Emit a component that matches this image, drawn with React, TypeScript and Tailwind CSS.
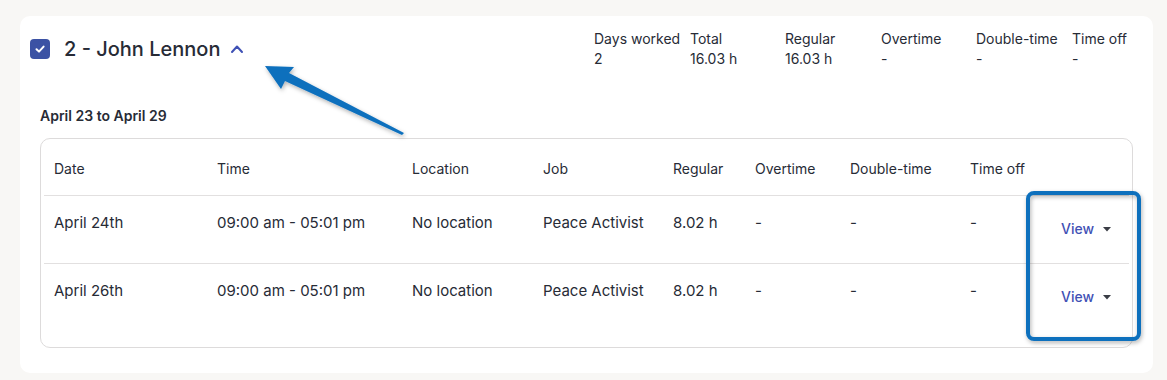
import type { ReactElement } from "react";

interface Shift {
	date: string;
	time: string;
	location: string;
	job: string;
	regular: string;
	overtime: string;
	doubleTime: string;
	timeOff: string;
}

const shifts: Shift[] = [
	{
		date: "April 24th",
		time: "09:00 am - 05:01 pm",
		location: "No location",
		job: "Peace Activist",
		regular: "8.02 h",
		overtime: "-",
		doubleTime: "-",
		timeOff: "-",
	},
	{
		date: "April 26th",
		time: "09:00 am - 05:01 pm",
		location: "No location",
		job: "Peace Activist",
		regular: "8.02 h",
		overtime: "-",
		doubleTime: "-",
		timeOff: "-",
	},
];

const stats = [
	{ label: "Days worked", value: "2" },
	{ label: "Total", value: "16.03 h" },
	{ label: "Regular", value: "16.03 h" },
	{ label: "Overtime", value: "-" },
	{ label: "Double-time", value: "-" },
	{ label: "Time off", value: "-" },
];

const cols =
	"grid grid-cols-[163px_195px_131px_130px_82px_95px_120px_90px_80px]";

const Annotations = (): ReactElement => (
	<svg
		className="pointer-events-none absolute inset-0"
		width="1167"
		height="380"
		viewBox="0 0 1167 380"
	>
		<defs>
			<filter id="shadow" x="-20%" y="-20%" width="140%" height="140%">
				<feDropShadow dx="1" dy="2" stdDeviation="2" floodColor="#000" floodOpacity="0.3" />
			</filter>
		</defs>
		<path
			d="M265 66 L294 67 L289 73 L404 133 L402 135 L285 81 L281 89 Z"
			fill="#0b6fbd"
			filter="url(#shadow)"
		/>
		<rect
			x="1028"
			y="193"
			width="111"
			height="146"
			rx="6"
			fill="none"
			stroke="#0b6fbd"
			strokeWidth="4"
			filter="url(#shadow)"
		/>
	</svg>
);

export default function App(): ReactElement {
	return (
		<div className="relative h-[380px] w-[1167px] overflow-hidden bg-[#f8f7f5] pt-4 pl-5 font-['Inter',sans-serif] text-[#272b36]">
			<section className="h-[357px] w-[1133px] rounded-[10px] bg-white px-5 pt-[13px]">
				<header className="-ml-2.5 flex items-center justify-between">
					<div className="flex items-center">
						<span className="flex h-5 w-5 items-center justify-center rounded-[4px] bg-[#3b52a4]">
							<svg width="12" height="12" viewBox="0 0 12 12">
								<path
									d="M2.5 6.2 L5 8.6 L9.6 3.6"
									fill="none"
									stroke="#fff"
									strokeWidth="2"
									strokeLinecap="round"
									strokeLinejoin="round"
								/>
							</svg>
						</span>
						<h2 className="ml-3.5 text-[20px] leading-7 font-medium">
							2 - John Lennon
						</h2>
						<svg className="ml-[10px]" width="14" height="14" viewBox="0 0 14 14">
							<path
								d="M2 10 L7 4.5 L12 10"
								fill="none"
								stroke="#3f51b5"
								strokeWidth="2"
								strokeLinecap="round"
								strokeLinejoin="round"
							/>
						</svg>
					</div>
					<dl className="grid grid-cols-[96px_95px_96px_95px_96px_61px] text-[14px] leading-5">
						{stats.map((s) => (
							<div key={s.label}>
								<dt className="whitespace-nowrap">{s.label}</dt>
								<dd>{s.value}</dd>
							</div>
						))}
					</dl>
				</header>

				<p className="mt-[37px] text-[14px] leading-5 font-semibold">
					April 23 to April 29
				</p>

				<div className="mt-[12px] rounded-[10px] border border-[#dddbdb] px-[3px] pb-[15px] leading-5">
					<div className={`${cols} h-[57px] border-b border-[#e2e0e0] pt-[20px] text-[14px]`}>
						{[
							"Date",
							"Time",
							"Location",
							"Job",
							"Regular",
							"Overtime",
							"Double-time",
							"Time off",
							"",
						].map((h, i) => (
							<div key={i} className="pl-2.5">
								{h}
							</div>
						))}
					</div>
					{shifts.map((s, idx) => (
						<div
							key={s.date}
							className={`${cols} h-[68px] text-[15px] ${idx === 0 ? "border-b border-[#e2e0e0]" : ""}`}
						>
							<div className="pt-[17px] pl-2.5">{s.date}</div>
							<div className="pt-[17px] pl-2.5">{s.time}</div>
							<div className="pt-[17px] pl-2.5">{s.location}</div>
							<div className="pt-[17px] pl-2.5">{s.job}</div>
							<div className="pt-[17px] pl-2.5">{s.regular}</div>
							<div className="pt-[17px] pl-2.5">{s.overtime}</div>
							<div className="pt-[17px] pl-2.5">{s.doubleTime}</div>
							<div className="pt-[17px] pl-2.5">{s.timeOff}</div>
							<div className="pt-[23px] pl-[11px]">
								<button
									type="button"
									className="flex items-center gap-[9px] text-[14px] font-medium text-[#3f51b5]"
								>
									View
									<svg width="8" height="5" viewBox="0 0 8 5">
										<path d="M0 0 L8 0 L4 4.5 Z" fill="#3a3d45" />
									</svg>
								</button>
							</div>
						</div>
					))}
				</div>
			</section>
			<Annotations />
		</div>
	);
}
